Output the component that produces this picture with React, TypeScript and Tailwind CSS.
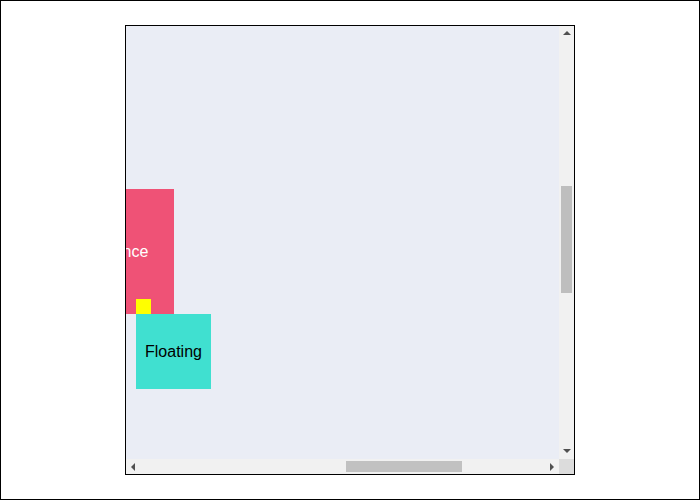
import { useLayoutEffect, useRef } from 'react';

function Arrow({ dir }: { dir: 'up' | 'down' | 'left' | 'right' }) {
  const points = {
    up: '4,0 8,4 0,4',
    down: '0,0 8,0 4,4',
    left: '4,0 4,8 0,4',
    right: '0,0 4,4 0,8',
  }[dir];
  const vertical = dir === 'up' || dir === 'down';
  return (
    <svg width={vertical ? 8 : 4} height={vertical ? 4 : 8} viewBox={vertical ? '0 0 8 4' : '0 0 4 8'}>
      <polygon points={points} fill="#505050" />
    </svg>
  );
}

export default function App() {
  const scrollRef = useRef<HTMLDivElement>(null);

  useLayoutEffect(() => {
    const el = scrollRef.current;
    if (!el) return;
    el.scrollLeft = 765;
    el.scrollTop = 587;
  }, []);

  return (
    <div
      className="w-[700px] h-[500px] border border-black bg-white flex items-center justify-center"
      style={{ fontFamily: '"Liberation Sans", Arial, sans-serif' }}
    >
      <div className="w-[450px] h-[450px] border border-black flex flex-col">
        <div className="flex flex-1 min-h-0">
          <div ref={scrollRef} className="flex-1 min-w-0 bg-[#eaedf5] overflow-hidden">
            <div className="relative w-[1504px] h-[1631px]">
              {/* reference */}
              <div className="absolute left-[688px] top-[750px] w-[125px] h-[125px] bg-[#ef5276] text-white text-base flex items-center justify-center">
                Reference
              </div>

              {/* floating */}
              <div className="absolute left-[775px] top-[875px] w-[75px] h-[75px] bg-[#40e0d0] text-black text-base flex items-center justify-center">
                Floating
              </div>

              {/* arrow */}
              <div className="absolute left-[775px] top-[860px] w-[15px] h-[15px] bg-[#ffff00]" />
            </div>
          </div>

          {/* vertical scrollbar */}
          <div className="w-[15px] bg-[#f1f1f1] flex flex-col">
            <div className="h-[15px] flex items-start justify-center pt-[5px]">
              <Arrow dir="up" />
            </div>
            <div className="flex-1">
              <div className="mt-[145px] mx-[2px] h-[107px] bg-[#bebebe]" />
            </div>
            <div className="h-[15px] flex items-start justify-center pt-[5px]">
              <Arrow dir="down" />
            </div>
          </div>
        </div>

        {/* horizontal scrollbar */}
        <div className="h-[15px] flex">
          <div className="flex-1 bg-[#f1f1f1] flex">
            <div className="w-[15px] flex items-center justify-start pl-[5px]">
              <Arrow dir="left" />
            </div>
            <div className="flex-1">
              <div className="ml-[205px] my-[2px] w-[116px] h-[11px] bg-[#c1c1c1]" />
            </div>
            <div className="w-[15px] flex items-center justify-end pr-[5px]">
              <Arrow dir="right" />
            </div>
          </div>
          <div className="w-[15px] bg-[#dcdcdc]" />
        </div>
      </div>
    </div>
  );
}
